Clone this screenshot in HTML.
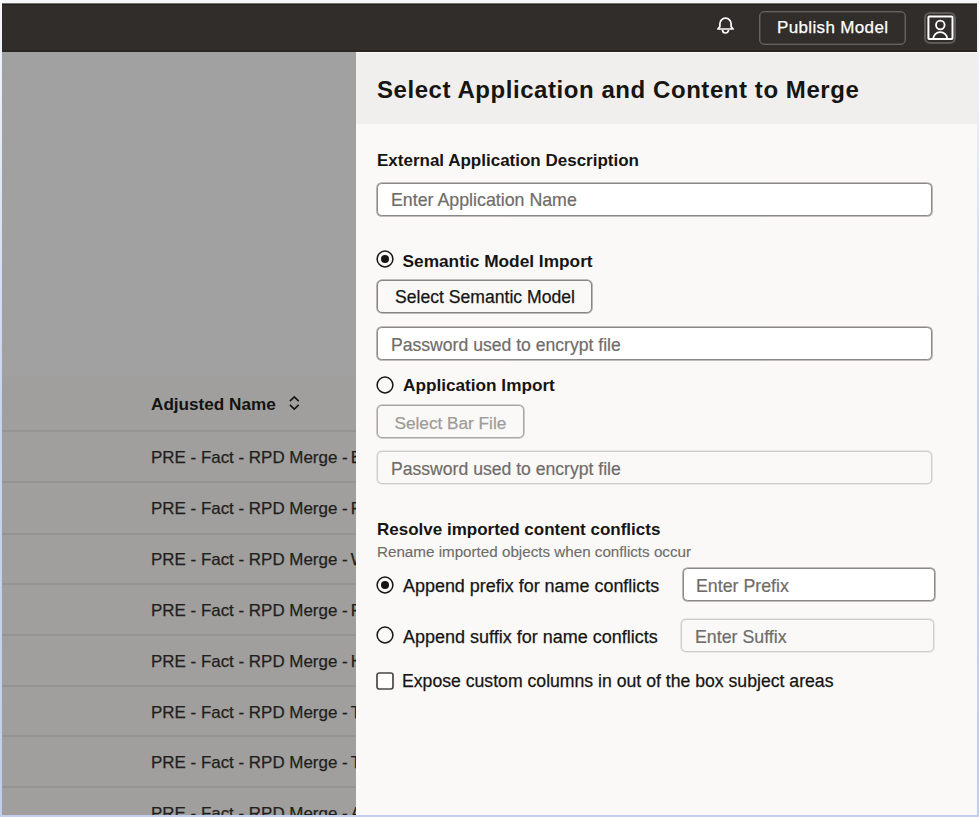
<!DOCTYPE html>
<html><head><meta charset="utf-8">
<style>
*{box-sizing:border-box;margin:0;padding:0}
html,body{width:979px;height:817px;overflow:hidden}
body{position:relative;font-family:"Liberation Sans",sans-serif;color:#161513;
background:linear-gradient(#f6f7fb 0,#dbe3f2 220px,#c7d4ed 420px,#c1cfec 817px)}
.a{position:absolute;white-space:nowrap}
#hdr{left:2px;top:3px;width:975px;height:49px;background:linear-gradient(#76726f 0,#76726f 1px,#221e1b 1px,#221e1b 2px,#312d2a 2px,#312d2a 47px,#2a2623 47px)}
#left{left:2px;top:52px;width:354px;height:763px;background:#a1a1a1}
#tbl{left:2px;top:376px;width:354px;height:439px;background:#a09f9d;overflow:hidden}
.rl{position:absolute;left:0;width:354px;height:2px;background:#959492}
.rt{position:absolute;left:149px;font-size:16.95px;color:#1f1e1c;-webkit-text-stroke:0.25px currentColor}
#panel{left:356px;top:52px;width:621px;height:763px;background:#fbf9f8;overflow:hidden}
#ph{left:0;top:0;width:621px;height:72px;background:linear-gradient(#f9f8f7 0,#f9f8f7 1px,#f1efed 1px)}
.inp{position:absolute;background:#fff;border:1px solid #8a8886;border-radius:4.5px;box-shadow:0 0 0 0.8px rgba(138,136,134,.7)}
.inp.dis{background:#faf9f7;border-color:#cfcdcb;box-shadow:0 0 0 0.5px rgba(207,204,201,.75)}
.ph{position:absolute;font-size:17.8px;color:#6f6c69;-webkit-text-stroke:0.2px currentColor}
.lbl{position:absolute;font-size:17px;font-weight:bold}
.txt{position:absolute;font-size:17.6px;-webkit-text-stroke:0.25px currentColor}
.btn{position:absolute;border:1px solid #878583;border-radius:5px;background:#fbf9f8;box-shadow:0 0 0 0.8px rgba(135,133,131,.7)}
</style></head><body>
<div id="hdr" class="a"></div>
<!-- bell -->
<svg class="a" style="left:716px;top:16px" width="20" height="20" viewBox="0 0 20 20">
<path d="M1.9 13 L3.9 10.6 V7.8 A5.6 5.6 0 0 1 15.1 7.8 V10.6 L17.1 13 Z" fill="none" stroke="#fff" stroke-width="1.7" stroke-linejoin="round"/>
<path d="M6.5 14 A3 3 0 0 0 12.5 14" fill="none" stroke="#fff" stroke-width="1.7"/>
</svg>
<div class="a" style="left:759px;top:11px;width:147px;height:34px;border:1px solid #67625f;border-radius:5px;box-shadow:inset 0 0 0 0.6px rgba(103,98,95,.8)"></div>
<div class="a" style="left:777px;top:17px;font-size:17px;letter-spacing:0.35px;color:#fff;line-height:22px;-webkit-text-stroke:0.25px #fff">Publish Model</div>
<!-- avatar -->
<div class="a" style="left:924px;top:12px;width:32px;height:32px;border:2px solid #5e5a57;border-radius:6px"></div>
<svg class="a" style="left:926px;top:14px" width="28" height="28" viewBox="0 0 28 28">
<rect x="2.4" y="2.5" width="24.1" height="22.6" rx="0.8" fill="none" stroke="#fff" stroke-width="2"/>
<circle cx="14.3" cy="11" r="4.3" fill="none" stroke="#fff" stroke-width="1.8"/>
<path d="M7.2 25.2 A7.05 7.05 0 0 1 21.3 25.2" fill="none" stroke="#fff" stroke-width="1.8"/>
</svg>

<div id="left" class="a"></div>
<div id="tbl" class="a">
  <div class="a" style="left:149px;top:18px;font-size:17.15px;font-weight:bold;color:#141312">Adjusted Name</div>
  <svg class="a" style="left:286px;top:19px" width="14" height="16" viewBox="0 0 14 16">
    <path d="M1.9 6.1 L6.3 1.9 L10.7 6.1 M1.9 9.9 L6.3 14.1 L10.7 9.9" fill="none" stroke="#141312" stroke-width="1.5"/>
  </svg>
  <div class="rl" style="top:54px"></div>
  <div class="rt" style="top:72px">PRE - Fact - RPD Merge -<span style="margin-left:3px">E</span></div>
  <div class="rl" style="top:105px"></div>
  <div class="rt" style="top:123px">PRE - Fact - RPD Merge -<span style="margin-left:3px">F</span></div>
  <div class="rl" style="top:157px"></div>
  <div class="rt" style="top:174px">PRE - Fact - RPD Merge -<span style="margin-left:3px">W</span></div>
  <div class="rl" style="top:207px"></div>
  <div class="rt" style="top:225px">PRE - Fact - RPD Merge -<span style="margin-left:3px">F</span></div>
  <div class="rl" style="top:258px"></div>
  <div class="rt" style="top:276px">PRE - Fact - RPD Merge -<span style="margin-left:3px">H</span></div>
  <div class="rl" style="top:309px"></div>
  <div class="rt" style="top:327px">PRE - Fact - RPD Merge -<span style="margin-left:3px">T</span></div>
  <div class="rl" style="top:359px"></div>
  <div class="rt" style="top:377px">PRE - Fact - RPD Merge -<span style="margin-left:3px">T</span></div>
  <div class="rl" style="top:410px"></div>
  <div class="rt" style="top:428px">PRE - Fact - RPD Merge -<span style="margin-left:3px">A</span></div>
</div>

<div id="panel" class="a">
  <div id="ph" class="a"></div>
  <div class="a" style="left:21px;top:23.5px;font-size:24px;font-weight:bold;letter-spacing:0.56px">Select Application and Content to Merge</div>

  <div class="lbl" style="left:21px;top:99px">External Application Description</div>
  <div class="inp" style="left:21px;top:131px;width:555px;height:33px"></div>
  <div class="ph" style="left:35px;top:138px">Enter Application Name</div>

  <svg class="a" style="left:19.4px;top:197.4px" width="20" height="20" viewBox="0 0 20 20"><circle cx="10" cy="10" r="7.9" fill="none" stroke="#161513" stroke-width="1.5"/><circle cx="10" cy="10" r="4" fill="#161513"/></svg>
  <div class="lbl" style="left:46.5px;top:199px;font-size:17.3px">Semantic Model Import</div>
  <div class="btn" style="left:21px;top:228px;width:215px;height:33px"></div>
  <div class="txt" style="left:39px;top:235px">Select Semantic Model</div>

  <div class="inp" style="left:21px;top:275px;width:555px;height:33px"></div>
  <div class="ph" style="left:35px;top:283px;font-size:17.6px">Password used to encrypt file</div>

  <svg class="a" style="left:19.4px;top:322.8px" width="20" height="20" viewBox="0 0 20 20"><circle cx="10" cy="10" r="7.9" fill="none" stroke="#161513" stroke-width="1.5"/></svg>
  <div class="lbl" style="left:47px;top:323px;font-size:17.2px">Application Import</div>
  <div class="btn dis" style="left:21px;top:353px;width:147px;height:33px;border-color:#a9a7a5;box-shadow:0 0 0 0.8px rgba(169,167,165,.7)"></div>
  <div class="txt" style="left:38.5px;top:360.5px;color:#9e9b98;font-size:17.2px">Select Bar File</div>

  <div class="inp dis" style="left:21px;top:399px;width:555px;height:33px"></div>
  <div class="ph" style="left:35px;top:407px;font-size:17.6px">Password used to encrypt file</div>

  <div class="lbl" style="left:21px;top:467.5px">Resolve imported content conflicts</div>
  <div class="a" style="left:21px;top:491px;font-size:15.2px;color:#6f6c69;-webkit-text-stroke:0.15px currentColor">Rename imported objects when conflicts occur</div>

  <svg class="a" style="left:19.4px;top:523.2px" width="20" height="20" viewBox="0 0 20 20"><circle cx="10" cy="10" r="7.9" fill="none" stroke="#161513" stroke-width="1.5"/><circle cx="10" cy="10" r="4" fill="#161513"/></svg>
  <div class="txt" style="left:47px;top:524px;font-size:17.95px">Append prefix for name conflicts</div>
  <div class="inp" style="left:327px;top:516px;width:252px;height:33px"></div>
  <div class="ph" style="left:340px;top:524px">Enter Prefix</div>

  <svg class="a" style="left:19.4px;top:572.8px" width="20" height="20" viewBox="0 0 20 20"><circle cx="10" cy="10" r="7.9" fill="none" stroke="#161513" stroke-width="1.5"/></svg>
  <div class="txt" style="left:47px;top:575px;font-size:18px">Append suffix for name conflicts</div>
  <div class="inp dis" style="left:325px;top:567px;width:253px;height:33px"></div>
  <div class="ph" style="left:339px;top:575px">Enter Suffix</div>

  <svg class="a" style="left:19.4px;top:618.6px" width="20" height="20" viewBox="0 0 20 20"><rect x="2" y="2" width="16" height="16" rx="2.2" fill="#fff" stroke="#4a4745" stroke-width="1.7"/></svg>
  <div class="txt" style="left:46px;top:619px;font-size:17.65px">Expose custom columns in out of the box subject areas</div>
</div>
</body></html>
